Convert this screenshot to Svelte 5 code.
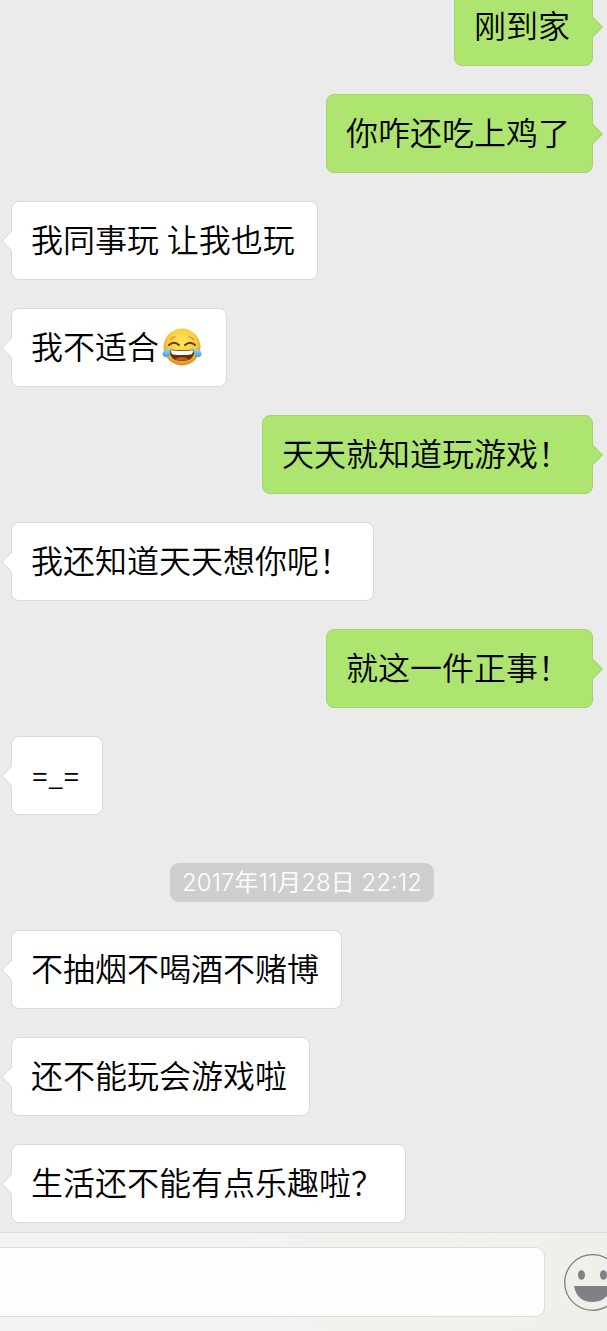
<script lang="ts">
  interface Message {
    kind: "mine" | "theirs" | "time";
    text: string;
    emoji?: boolean;
  }

  const messages: Message[] = [
    { kind: "mine", text: "刚到家" },
    { kind: "mine", text: "你咋还吃上鸡了" },
    { kind: "theirs", text: "我同事玩 让我也玩" },
    { kind: "theirs", text: "我不适合", emoji: true },
    { kind: "mine", text: "天天就知道玩游戏！" },
    { kind: "theirs", text: "我还知道天天想你呢！" },
    { kind: "mine", text: "就这一件正事！" },
    { kind: "theirs", text: "=_=" },
    { kind: "time", text: "2017年11月28日 22:12" },
    { kind: "theirs", text: "不抽烟不喝酒不赌博" },
    { kind: "theirs", text: "还不能玩会游戏啦" },
    { kind: "theirs", text: "生活还不能有点乐趣啦？" },
  ];

  let draft = $state("");
</script>

{#snippet joy()}
  <svg class="joy" viewBox="0 0 40 40" role="img" aria-label="笑哭">
    <defs>
      <radialGradient id="joy-face" cx="50%" cy="38%" r="64%">
        <stop offset="0" stop-color="#ffe75c" />
        <stop offset="0.6" stop-color="#fbcb3f" />
        <stop offset="1" stop-color="#dc8420" />
      </radialGradient>
      <linearGradient id="joy-tear" x1="0" y1="0" x2="0" y2="1">
        <stop offset="0" stop-color="#9adcf5" />
        <stop offset="1" stop-color="#3aa3dc" />
      </linearGradient>
    </defs>
    <circle cx="20" cy="19" r="18.5" fill="url(#joy-face)" />
    <g fill="none" stroke="#5f3a0b" stroke-linecap="round">
      <path d="M8.5 11.5Q10 9.3 13 8.8M27 8.8Q30 9.3 31.5 11.5" stroke="#c68a22" stroke-width="1.1" />
      <path d="M7 17Q12 12.5 17 17M23 17Q28 12.5 33 17" stroke-width="1.9" />
    </g>
    <path d="M7.5 21.5Q20 23 32.5 21.5Q32.5 33 20 33T7.5 21.5Z" fill="#653009" />
    <path d="M9 22.3Q20 23.5 31 22.3Q31 26 29 26.5Q20 27.5 11 26.5Q9 26 9 22.3Z" fill="#fff" />
    <path d="M13 31Q20 27 27 31Q20 34.5 13 31Z" fill="#bd5b22" />
    <path d="M8.5 20.5Q9 29 4 29Q0 29 .5 25Q1 21.5 8.5 20.5ZM31.5 20.5Q31 29 36 29Q40 29 39.5 25Q39 21.5 31.5 20.5Z" fill="url(#joy-tear)" />
  </svg>
{/snippet}

<div class="chat">
  <main class="messages">
    {#each messages as message}
      {#if message.kind === "time"}
        <time class="time" datetime="2017-11-28T22:12">{message.text}</time>
      {:else}
        <div class="bubble {message.kind}">
          {message.text}{#if message.emoji}{@render joy()}{/if}
        </div>
      {/if}
    {/each}
  </main>

  <footer class="composer">
    <input type="text" aria-label="输入消息" bind:value={draft} />
    <button type="button" aria-label="表情">
      <svg viewBox="0 0 57 57" aria-hidden="true">
        <circle cx="28.5" cy="28.5" r="27.8" fill="none" stroke="#7d7d82" stroke-width="1.3" />
        <g fill="#808086">
          <ellipse cx="17.5" cy="21" rx="3.5" ry="4.8" />
          <ellipse cx="39.5" cy="21" rx="3.5" ry="4.8" />
          <path d="M10 32H47Q44 48 28.5 48T10 32Z" />
        </g>
      </svg>
    </button>
  </footer>
</div>

<style>
  :global(body) {
    margin: 0;
    background: #ebebeb;
  }

  .chat {
    display: flex;
    flex-direction: column;
    height: 100vh;
    overflow: hidden;
    font-family: Roboto, "Noto Sans CJK SC", sans-serif;
    color: #000;
  }

  /* newest message stays next to the composer, older ones run off the top */
  .messages {
    flex: 1;
    min-height: 0;
    display: flex;
    flex-direction: column;
    justify-content: flex-end;
    align-items: flex-start;
    gap: 28px;
    padding: 0 14px 9px 11px;
    overflow: hidden;
  }

  .bubble {
    position: relative;
    flex: none;
    display: flex;
    align-items: center;
    padding: 20px 22px 19px 19px;
    border: 1px solid #dadada;
    border-radius: 8px;
    background: #fff;
    font-size: 32px;
    font-weight: 350;
    line-height: 38px;
  }

  .bubble::before {
    content: "";
    position: absolute;
    top: 50%;
    left: -8px;
    width: 13px;
    height: 13px;
    border: 1px solid #dadada;
    border-width: 0 0 1px 1px;
    background: inherit;
    transform: translateY(-50%) rotate(45deg);
  }

  .mine {
    align-self: flex-end;
    border-color: #a3d46c;
    background: #aee571;
  }

  .mine::before {
    left: auto;
    right: -8px;
    border-color: #a3d46c;
    border-width: 1px 1px 0 0;
  }

  .joy {
    width: 40px;
    height: 40px;
    margin: -1px 2px -1px 3px;
  }

  .time {
    flex: none;
    align-self: center;
    margin-top: 20px;
    padding: 0 12px;
    border-radius: 9px;
    background: #cecece;
    color: #fff;
    font-family: Inter, "Noto Sans CJK SC", sans-serif;
    font-size: 24px;
    font-weight: 350;
    line-height: 39px;
  }

  .composer {
    flex: none;
    display: flex;
    align-items: center;
    gap: 19px;
    padding: 14px 0;
    border-top: 1px solid #dcdedc;
    background: linear-gradient(90deg, #f3f3f5 40%, #f0f2eb 60%, #eef1ea);
  }

  input {
    flex: 1;
    min-width: 0;
    height: 70px;
    box-sizing: border-box;
    padding: 0 16px;
    border: 1px solid #dcdedc;
    border-left: 0;
    border-radius: 0 9px 9px 0;
    background: #fcfdfc;
    font: inherit;
    font-size: 32px;
  }

  button {
    flex: none;
    width: 57px;
    height: 57px;
    margin-right: -14px;
    padding: 0;
    border: 0;
    background: none;
    cursor: pointer;
  }

  button svg {
    display: block;
  }
</style>
